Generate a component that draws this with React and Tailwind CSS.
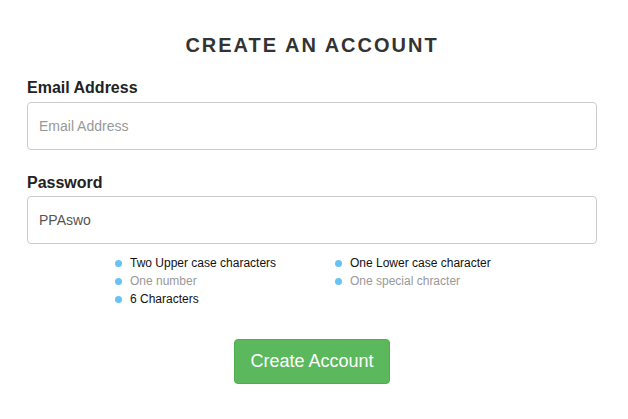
import React from "react";

const rules = [
  { text: "Two Upper case characters", ok: true },
  { text: "One Lower case character", ok: true },
  { text: "One number", ok: false },
  { text: "One special chracter", ok: false },
  { text: "6 Characters", ok: true },
];

function Rule({ text, ok }) {
  return (
    <li className="flex items-center h-[18px]">
      <span className="w-[7px] h-[7px] rounded-full bg-[#66c3f2] mr-[8px] shrink-0" />
      <span className={ok ? "text-[#111]" : "text-[#999]"}>{text}</span>
    </li>
  );
}

export default function App() {
  return (
    <div
      className="w-[628px] h-[419px] bg-white pl-[27px] pr-[31px] flex flex-col"
      style={{ fontFamily: '"Liberation Sans", Arial, sans-serif' }}
    >
      <h1 className="mt-[34px] text-center text-[20px] leading-[22px] font-bold tracking-[2px] text-[#333]">
        CREATE AN ACCOUNT
      </h1>

      <label className="mt-[23px] text-[16px] leading-[18px] font-bold text-[#222]">
        Email Address
      </label>
      <input
        type="text"
        placeholder="Email Address"
        className="mt-[5px] h-[48px] w-full border border-[#ccc] rounded-[4px] pl-[11px] text-[14px] text-[#555] placeholder:text-[#999] outline-none"
      />

      <label className="mt-[24px] text-[16px] leading-[18px] font-bold text-[#222]">
        Password
      </label>
      <input
        type="text"
        defaultValue="PPAswo"
        className="mt-[4px] h-[48px] w-full border border-[#ccc] rounded-[4px] pl-[11px] text-[14px] text-[#555] outline-none"
      />

      <ul className="mt-[10px] ml-[88px] grid grid-cols-[220px_220px] text-[12px] leading-[18px]">
        {rules.map((r) => (
          <Rule key={r.text} {...r} />
        ))}
      </ul>

      <div className="mt-[31px] flex justify-center">
        <button className="h-[45px] w-[156px] rounded-[4px] bg-[#5cb85c] border border-[#4cae4c] text-white text-[18px]">
          Create Account
        </button>
      </div>
    </div>
  );
}
